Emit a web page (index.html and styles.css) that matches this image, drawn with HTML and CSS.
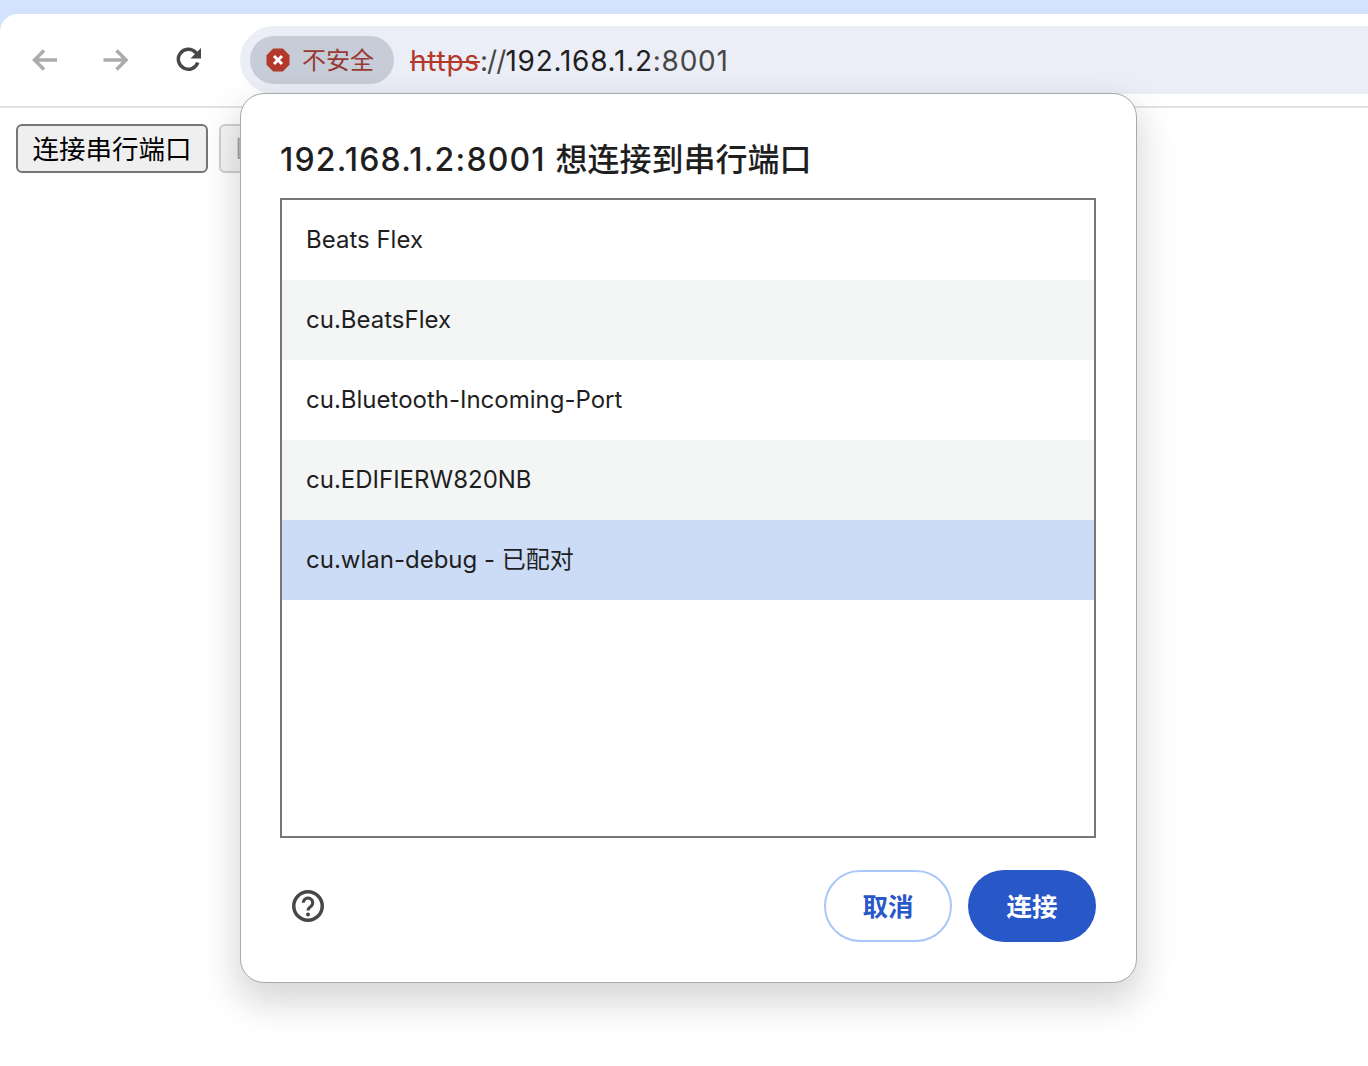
FILE: index.html
```html
<!DOCTYPE html>
<html lang="zh-CN">
<head>
<meta charset="utf-8">
<title>串行端口</title>
<link rel="stylesheet" href="styles.css">
</head>
<body>
<div class="window">
  <header class="toolbar">
    <nav class="nav">
      <svg class="nav-icon" viewBox="0 0 26 26"><path class="s-grey" d="M25 13H2.500M12 3.500L2.500 13l9.500 9.500"/></svg>
      <svg class="nav-icon" viewBox="0 0 26 26"><path class="s-grey" d="M0.500 13H23M13.500 3.500L23 13l-9.500 9.500"/></svg>
      <svg class="nav-icon reload" viewBox="0 0 26 26"><path class="s-dark" d="M21.800 15.500A10 10 0 1 1 19.500 5.200L23 8.500"/><path class="f-dark" d="M25 1v10.500H14.500z"/></svg>
    </nav>
    <div class="omnibox">
      <div class="chip">
        <svg class="chip-icon" viewBox="0 0 24 24"><path class="f-red" d="M7.200 0.500h9.600l6.700 6.700v9.600l-6.700 6.700H7.200L0.500 16.800V7.200z"/><path class="s-white" d="M8 8l8 8M16 8l-8 8"/></svg>
        <span class="chip-text">不安全</span>
      </div>
      <div class="url"><span class="scheme">https</span><span class="sep">://</span><span class="host">192.168.1.2</span><span class="port">:8001</span></div>
    </div>
  </header>
  <main class="content">
    <button class="page-btn">连接串行端口</button>
    <button class="page-btn" disabled>断开连接</button>
  </main>
</div>

<section class="dialog">
  <h1 class="title"><span class="addr">192.168.1.2:8001 </span>想连接到串行端口</h1>
  <ul class="list">
    <li class="row">Beats Flex</li>
    <li class="row alt">cu.BeatsFlex</li>
    <li class="row">cu.Bluetooth-Incoming-Port</li>
    <li class="row alt">cu.EDIFIERW820NB</li>
    <li class="row selected">cu.wlan-debug - 已配对</li>
  </ul>
  <footer class="actions">
    <svg class="help" viewBox="0 0 32 32"><circle class="s-help" cx="16" cy="16" r="14.250"/><path class="s-help2" d="M11.300 12.800a4.700 4.700 0 1 1 7.400 3.800c-1.700 1.200-2.700 2-2.700 4"/><circle class="f-dark" cx="16" cy="24.500" r="2"/></svg>
    <div class="buttons">
      <button class="btn outline">取消</button>
      <button class="btn primary">连接</button>
    </div>
  </footer>
</section>
</body>
</html>
```
FILE: styles.css
```css
* { box-sizing: border-box; }
html, body { margin: 0; padding: 0; height: 100%; overflow: hidden; }
body {
  background: #d3e3fd;
  padding-top: 14px;
  font-family: "Inter", "Noto Sans CJK SC", sans-serif;
  color: #1f1f1f;
}
.window {
  height: 100%;
  background: #fff;
  border-radius: 18px 0 0 0;
}
.toolbar {
  height: 94px;
  display: flex;
  padding-top: 12px;
  align-items: flex-start;
  border-bottom: 2px solid #e3e3e3;
}
.nav {
  width: 240px;
  height: 68px;
  display: flex;
  align-items: center;
  padding-left: 32px;
  gap: 45px;
}
.nav-icon { width: 26px; height: 26px; flex: none; }
.reload { margin-left: 2px; }
.s-grey { fill: none; stroke: #acacac; stroke-width: 3.500; }
.s-dark { fill: none; stroke: #474747; stroke-width: 3.500; }
.f-dark { fill: #474747; }
.omnibox {
  flex: 1;
  height: 68px;
  background: #ebeef7;
  border-radius: 34px 0 0 34px;
  display: flex;
  align-items: center;
  padding-left: 10px;
}
.chip {
  width: 144px;
  height: 48px;
  border-radius: 24px;
  background: #c7ccd9;
  display: flex;
  align-items: center;
  padding-left: 16px;
  gap: 12px;
}
.chip-icon { width: 24px; height: 24px; flex: none; }
.f-red { fill: #b3392a; }
.s-white { fill: none; stroke: #fff; stroke-width: 3; }
.chip-text { font-size: 24px; color: #983a33; padding-bottom: 4px; }
.url {
  margin-left: 16px;
  padding-top: 2px;
  font-size: 28px;
  letter-spacing: 0.75px;
  color: #1f1f1f;
  white-space: nowrap;
}
.scheme { color: #b3392a; text-decoration: line-through; }
.sep, .port { color: #474747; }
.sep { letter-spacing: -0.900px; }
.content {
  padding: 16px;
  display: flex;
  gap: 11px;
  align-items: flex-start;
}
.page-btn {
  flex: none;
  height: 49px;
  padding: 0 14.500px 3px;
  font-family: "Noto Sans CJK SC", sans-serif;
  font-size: 26.500px;
  color: #000;
  background: #efefef;
  border: 2px solid #767676;
  border-radius: 6px;
}
.page-btn:disabled { color: #a0a0a0; background: #f4f4f4; border-color: #cfcfcf; }
.dialog {
  position: absolute;
  left: 240px;
  top: 93px;
  width: 897px;
  height: 890px;
  background: #fff;
  border: 1px solid #a9a9a9;
  border-radius: 24px;
  box-shadow: 0 16px 36px 4px rgba(0, 0, 0, 0.16);
  padding: 0 40px 0 39px;
}
.title {
  margin: 0;
  height: 104px;
  padding-top: 44px;
  font-size: 32px;
  line-height: 44px;
  font-weight: 500;
  color: #1f1f1f;
  white-space: nowrap;
}
.addr { letter-spacing: 1.180px; }
.list {
  margin: 0;
  padding: 0;
  list-style: none;
  height: 640px;
  width: 816px;
  border: 2px solid #767676;
}
.row {
  height: 80px;
  padding: 0 0 2px 24px;
  display: flex;
  align-items: center;
  font-size: 24px;
  color: #1f1f1f;
}
.alt { background: #f4f6f5; }
.selected { background: #ccdcf7; padding-bottom: 6px; }
.actions {
  margin-top: 32px;
  display: flex;
  align-items: center;
  justify-content: space-between;
  width: 816px;
}
.help { width: 32px; height: 32px; margin-left: 12px; }
.s-help { fill: none; stroke: #474747; stroke-width: 3.500; }
.s-help2 { fill: none; stroke: #474747; stroke-width: 3; }
.buttons { display: flex; gap: 16px; }
.btn {
  width: 128px;
  height: 72px;
  border-radius: 36px;
  font-family: "Noto Sans CJK SC", sans-serif;
  font-size: 25.500px;
  font-weight: 700;
  padding: 0 0 4px;
}
.outline { background: #fff; color: #2857c8; border: 2px solid #a8c7fa; }
.primary { background: #2857c8; color: #fff; border: none; }
```
